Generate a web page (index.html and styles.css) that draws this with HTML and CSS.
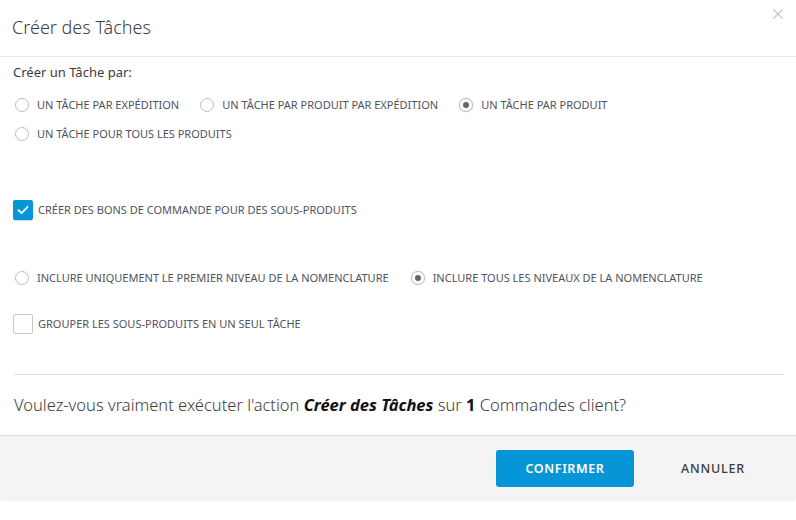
FILE: index.html
```html
<!DOCTYPE html>
<html lang="fr">
<head>
<meta charset="utf-8">
<title>Créer des Tâches</title>
<link rel="stylesheet" href="styles.css">
</head>
<body>
<div class="dialog">
  <div class="header">
    <h1 class="title">Créer des Tâches</h1>
    <button class="close" aria-label="Fermer">
      <svg width="10" height="10" viewBox="0 0 10 10"><path d="M0.5 0.5 L9.5 9.5 M9.5 0.5 L0.5 9.5" stroke="#c4c4c4" stroke-width="1.1" fill="none"/></svg>
    </button>
  </div>
  <div class="body">
    <div class="intro">Créer un Tâche par:</div>
    <div class="radio-group">
      <label class="opt"><span class="radio"></span><span class="lbl">Un Tâche par expédition</span></label>
      <label class="opt"><span class="radio"></span><span class="lbl">Un Tâche par produit par expédition</span></label>
      <label class="opt"><span class="radio checked"></span><span class="lbl">Un Tâche par produit</span></label>
      <label class="opt"><span class="radio"></span><span class="lbl">Un Tâche pour tous les produits</span></label>
    </div>
    <label class="check-row first-check">
      <span class="box checked"><svg width="20" height="20" viewBox="0 0 20 20"><path d="M5.5 10.2 L8.6 13.2 L14.6 6.8" stroke="#fff" stroke-width="1.8" fill="none" stroke-linecap="round" stroke-linejoin="round"/></svg></span>
      <span class="lbl">Créer des bons de commande pour des sous-produits</span>
    </label>
    <div class="radio-group level">
      <label class="opt"><span class="radio"></span><span class="lbl">Inclure uniquement le premier niveau de la nomenclature</span></label>
      <label class="opt"><span class="radio checked"></span><span class="lbl">Inclure tous les niveaux de la nomenclature</span></label>
    </div>
    <label class="check-row second-check">
      <span class="box"></span>
      <span class="lbl">Grouper les sous-produits en un seul Tâche</span>
    </label>
    <hr class="sep">
    <p class="question">Voulez-vous vraiment exécuter l'action <em>Créer des Tâches</em> sur <strong>1</strong> Commandes client?</p>
  </div>
  <div class="footer">
    <button class="btn primary">Confirmer</button>
    <button class="btn ghost">Annuler</button>
  </div>
</div>
</body>
</html>
```
FILE: styles.css
```css
* { box-sizing: border-box; }
html, body {
  margin: 0;
  padding: 0;
  background: #ffffff;
  font-family: "Noto Sans", "Open Sans", sans-serif;
  color: #3c3c3c;
}
.dialog {
  width: 796px;
  height: 501px;
  background: #fff;
  border-radius: 0 0 4px 4px;
  overflow: hidden;
  display: flex;
  flex-direction: column;
}
.header {
  height: 57px;
  border-bottom: 1px solid #e6e6e6;
  padding: 14px 12px 0 12px;
  display: flex;
  justify-content: space-between;
  align-items: flex-start;
  position: relative;
}
.title {
  margin: 0;
  font-size: 18px;
  line-height: 26px;
  font-weight: 300;
  color: #404040;
}
.close {
  position: absolute;
  top: 9px;
  right: 13px;
  width: 10px;
  height: 10px;
  padding: 0;
  border: 0;
  background: none;
  display: block;
}
.close svg { display: block; }
.body {
  flex: 1;
  padding: 6px 12px 0 13px;
}
.intro {
  font-size: 13px;
  line-height: 18px;
  color: #3c3c3c;
}
.radio-group {
  margin-top: 13px;
  display: flex;
  flex-wrap: wrap;
  column-gap: 21px;
  row-gap: 7px;
  padding-left: 2px;
}
.opt {
  display: flex;
  align-items: center;
  gap: 8px;
  height: 22px;
}
.radio {
  width: 14px;
  height: 14px;
  border: 1px solid #bdbdbd;
  border-radius: 50%;
  background: #fff;
  display: flex;
  align-items: center;
  justify-content: center;
  flex: none;
}
.radio.checked {
  box-shadow: 0 0 2px rgba(0,0,0,0.15);
}
.radio.checked::after {
  content: "";
  width: 6px;
  height: 6px;
  border-radius: 50%;
  background: #666;
}
.lbl {
  font-size: 11px;
  line-height: 14px;
  text-transform: uppercase;
  color: #52525e;
  white-space: nowrap;
}
.check-row {
  display: flex;
  align-items: center;
  gap: 5px;
}
.first-check { margin-top: 55px; }
.second-check { margin-top: 25px; }
.level { margin-top: 47px; column-gap: 22px; }
.box {
  width: 20px;
  height: 20px;
  border: 1px solid #c8c8c8;
  border-radius: 2px;
  background: #fff;
  flex: none;
  display: block;
}
.box.checked {
  background: #0696d7;
  border-color: #0696d7;
  box-shadow: 0 1px 1px rgba(0,0,0,0.15);
}
.box svg { display: block; margin: -1px; }
.sep {
  margin: 40px 0 0 1px;
  border: 0;
  border-top: 1px solid #e0e0e0;
  height: 0;
}
.question {
  margin: 19px 0 0 1px;
  font-size: 16.5px;
  line-height: 22px;
  font-weight: 300;
  color: #3c3c3c;
}
.question em {
  font-style: italic;
  font-weight: 700;
  color: #111;
}
.question strong {
  font-weight: 700;
  color: #111;
}
.footer {
  height: 66px;
  border-top: 1px solid #dcdcdc;
  background: #f4f4f4;
  display: flex;
  justify-content: flex-end;
  align-items: center;
  gap: 10px;
  padding: 0 14px;
}
.btn {
  width: 138px;
  height: 37px;
  border: 0;
  border-radius: 3px;
  font-family: "Noto Sans", "Open Sans", sans-serif;
  font-size: 12.5px;
  font-weight: 600;
  letter-spacing: 0.6px;
  text-transform: uppercase;
}
.primary {
  background: #0696d7;
  color: #fff;
}
.ghost {
  background: transparent;
  color: #3c3c3c;
  font-weight: 500;
  letter-spacing: 0.8px;
}
```
